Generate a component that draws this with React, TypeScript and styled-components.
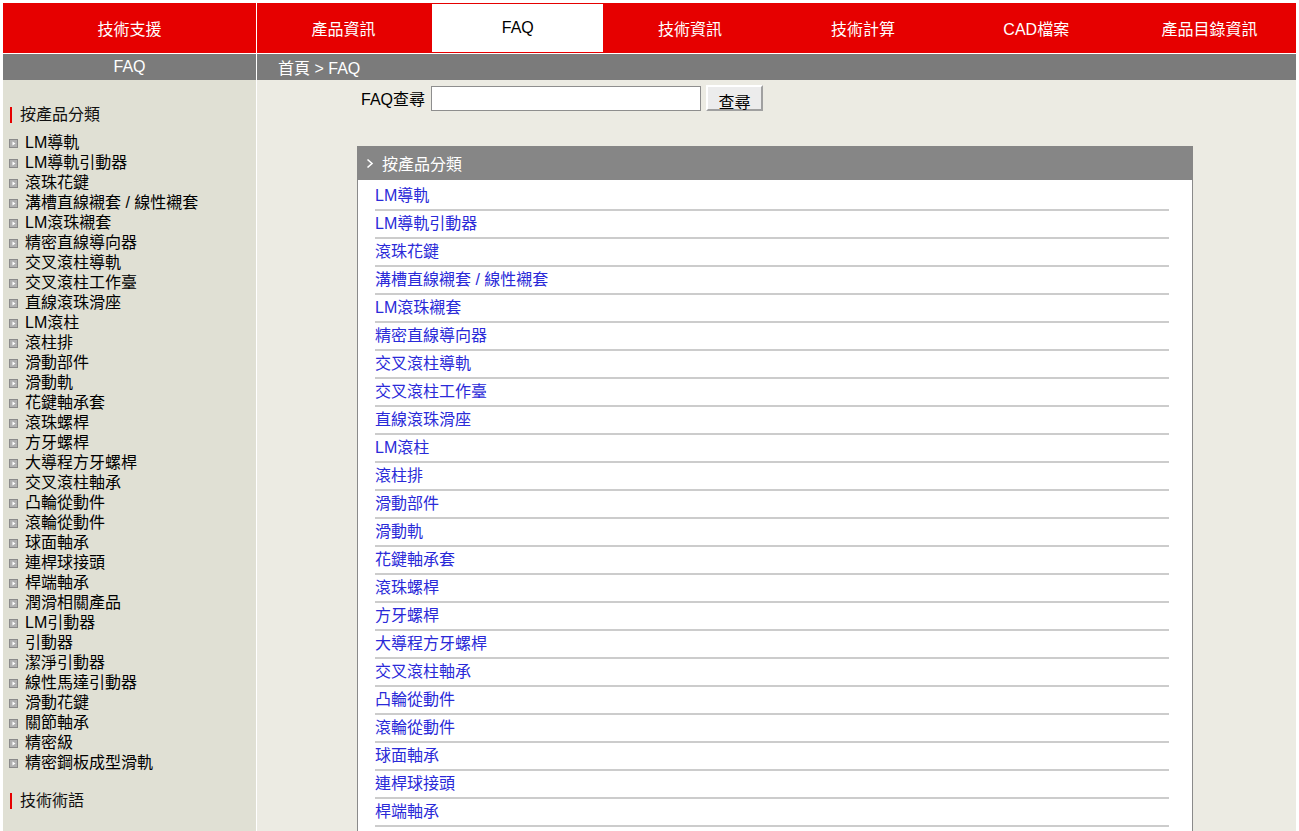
import React from "react";
import styled, { createGlobalStyle } from "styled-components";

const Global = createGlobalStyle`
  html { scrollbar-width: none; }
  html::-webkit-scrollbar { display: none; }
  body {
    margin: 3px;
    background: #ffffff;
    font-family: "Liberation Sans", "Noto Sans CJK TC", sans-serif;
    font-size: 16px;
    color: #000;
  }
  * { box-sizing: border-box; }
`;

const Page = styled.div`
  width: 1293px;
  display: flex;
  flex-direction: column;
  background: #ffffff;
`;

const TopRow = styled.div`
  display: flex;
  gap: 1px;
  height: 50px;
`;

const SideTitle = styled.div`
  width: 253px;
  flex: none;
  background: #e60000;
  color: #fff;
  display: flex;
  align-items: center;
  justify-content: center;
  font-size: 16px;
`;

const Nav = styled.nav`
  flex: 1;
  display: grid;
  grid-template-columns: repeat(6, 1fr);
  background: #e60000;
`;

const Tab = styled.div<{ $active?: boolean }>`
  display: flex;
  align-items: center;
  justify-content: center;
  margin: ${(p) => (p.$active ? "1px 0 1px 2px" : "0")};
  background: ${(p) => (p.$active ? "#ffffff" : "transparent")};
  color: ${(p) => (p.$active ? "#000" : "#fff")};
  font-size: 16px;
`;

const SubRow = styled.div`
  display: flex;
  gap: 1px;
  height: 26px;
  margin-top: 1px;
`;

const SubLeft = styled.div`
  width: 253px;
  flex: none;
  background: #7b7b7b;
  color: #fff;
  display: flex;
  align-items: center;
  justify-content: center;
  font-size: 16px;
`;

const SubRight = styled.div`
  flex: 1;
  background: #7b7b7b;
  color: #fff;
  display: flex;
  align-items: center;
  padding-left: 21px;
  font-size: 16px;
`;

const BodyRow = styled.div`
  display: flex;
  gap: 1px;
`;

const Sidebar = styled.aside`
  width: 253px;
  flex: none;
  background: #e0e0d4;
  padding: 27px 0 30px 0;
`;

const SideHeader = styled.div<{ $top?: number }>`
  margin: ${(p) => p.$top ?? 0}px 0 10px 7px;
  padding-left: 8px;
  border-left: 2px solid #e60000;
  line-height: 16px;
  font-size: 16px;
  color: #111;
`;

const SideList = styled.ul`
  list-style: none;
  margin: 0;
  padding: 0;
`;

const SideItem = styled.li`
  display: flex;
  align-items: center;
  gap: 7px;
  padding-left: 6px;
  height: 20px;
  line-height: 20px;
  font-size: 16px;
  color: #000;
  white-space: nowrap;
`;

const Main = styled.main`
  flex: 1;
  background: #ecebe3;
  padding-top: 5px;
  padding-bottom: 20px;
`;

const SearchRow = styled.form`
  display: flex;
  align-items: center;
  margin-left: 104px;
  height: 26px;
`;

const SearchLabel = styled.label`
  font-size: 16px;
  color: #000;
`;

const SearchInput = styled.input`
  margin-left: 6px;
  width: 270px;
  height: 25px;
  border: 1px solid #8e8e8e;
  background: #fff;
`;

const SearchButton = styled.button`
  margin-left: 5px;
  width: 57px;
  height: 26px;
  border: 2px solid;
  border-color: #ffffff #a0a0a0 #a0a0a0 #ffffff;
  background: #ececec;
  font-family: "Liberation Sans", "Noto Sans CJK TC", sans-serif;
  font-size: 16px;
  color: #000;
  padding: 2px 0 0 0;
`;

const Panel = styled.section`
  margin: 35px 0 0 100px;
  width: 836px;
`;

const PanelHead = styled.div`
  height: 34px;
  background: #868686;
  color: #fff;
  display: flex;
  align-items: center;
  gap: 8px;
  padding-left: 9px;
  font-size: 16px;
`;

const PanelBody = styled.ul`
  list-style: none;
  margin: 0;
  padding: 3px 23px 0 17px;
  background: #fff;
  border-left: 1px solid #8a8a8a;
  border-right: 1px solid #8a8a8a;
`;

const PanelRow = styled.li`
  height: 28px;
  line-height: 26px;
  border-bottom: 2px solid #cccccc;
  color: #2a2ad8;
  font-size: 16px;
`;

const items = [
  "LM導軌",
  "LM導軌引動器",
  "滾珠花鍵",
  "溝槽直線襯套 / 線性襯套",
  "LM滾珠襯套",
  "精密直線導向器",
  "交叉滾柱導軌",
  "交叉滾柱工作臺",
  "直線滾珠滑座",
  "LM滾柱",
  "滾柱排",
  "滑動部件",
  "滑動軌",
  "花鍵軸承套",
  "滾珠螺桿",
  "方牙螺桿",
  "大導程方牙螺桿",
  "交叉滾柱軸承",
  "凸輪從動件",
  "滾輪從動件",
  "球面軸承",
  "連桿球接頭",
  "桿端軸承",
  "潤滑相關產品",
  "LM引動器",
  "引動器",
  "潔淨引動器",
  "線性馬達引動器",
  "滑動花鍵",
  "關節軸承",
  "精密級",
  "精密鋼板成型滑軌",
];

const tabs = ["產品資訊", "FAQ", "技術資訊", "技術計算", "CAD檔案", "產品目錄資訊"];

const Bullet = () => (
  <svg width="9" height="9" viewBox="0 0 9 9" style={{ flex: "none" }}>
    <rect x="0" y="0" width="9" height="9" fill="#8a8a8a" />
    <rect x="1" y="1" width="7" height="7" fill="#b0b0b0" />
    <polygon points="3.5,2.5 6.5,4.5 3.5,6.5" fill="#ffffff" />
  </svg>
);

const Chevron = () => (
  <svg width="8" height="11" viewBox="0 0 8 11">
    <polyline points="1.5,1.5 6,5.5 1.5,9.5" fill="none" stroke="#fff" strokeWidth="1.6" />
  </svg>
);

export default function App() {
  return (
    <>
      <Global />
      <Page>
        <TopRow>
          <SideTitle>技術支援</SideTitle>
          <Nav>
            {tabs.map((t) => (
              <Tab key={t} $active={t === "FAQ"}>
                {t}
              </Tab>
            ))}
          </Nav>
        </TopRow>
        <SubRow>
          <SubLeft>FAQ</SubLeft>
          <SubRight>首頁 &gt; FAQ</SubRight>
        </SubRow>
        <BodyRow>
          <Sidebar>
            <SideHeader>按產品分類</SideHeader>
            <SideList>
              {items.map((it) => (
                <SideItem key={it}>
                  <Bullet />
                  {it}
                </SideItem>
              ))}
            </SideList>
            <SideHeader $top={20}>技術術語</SideHeader>
          </Sidebar>
          <Main>
            <SearchRow onSubmit={(e) => e.preventDefault()}>
              <SearchLabel>FAQ查尋</SearchLabel>
              <SearchInput type="text" />
              <SearchButton type="submit">查尋</SearchButton>
            </SearchRow>
            <Panel>
              <PanelHead>
                <Chevron />
                按產品分類
              </PanelHead>
              <PanelBody>
                {items.map((it) => (
                  <PanelRow key={it}>{it}</PanelRow>
                ))}
              </PanelBody>
            </Panel>
          </Main>
        </BodyRow>
      </Page>
    </>
  );
}
